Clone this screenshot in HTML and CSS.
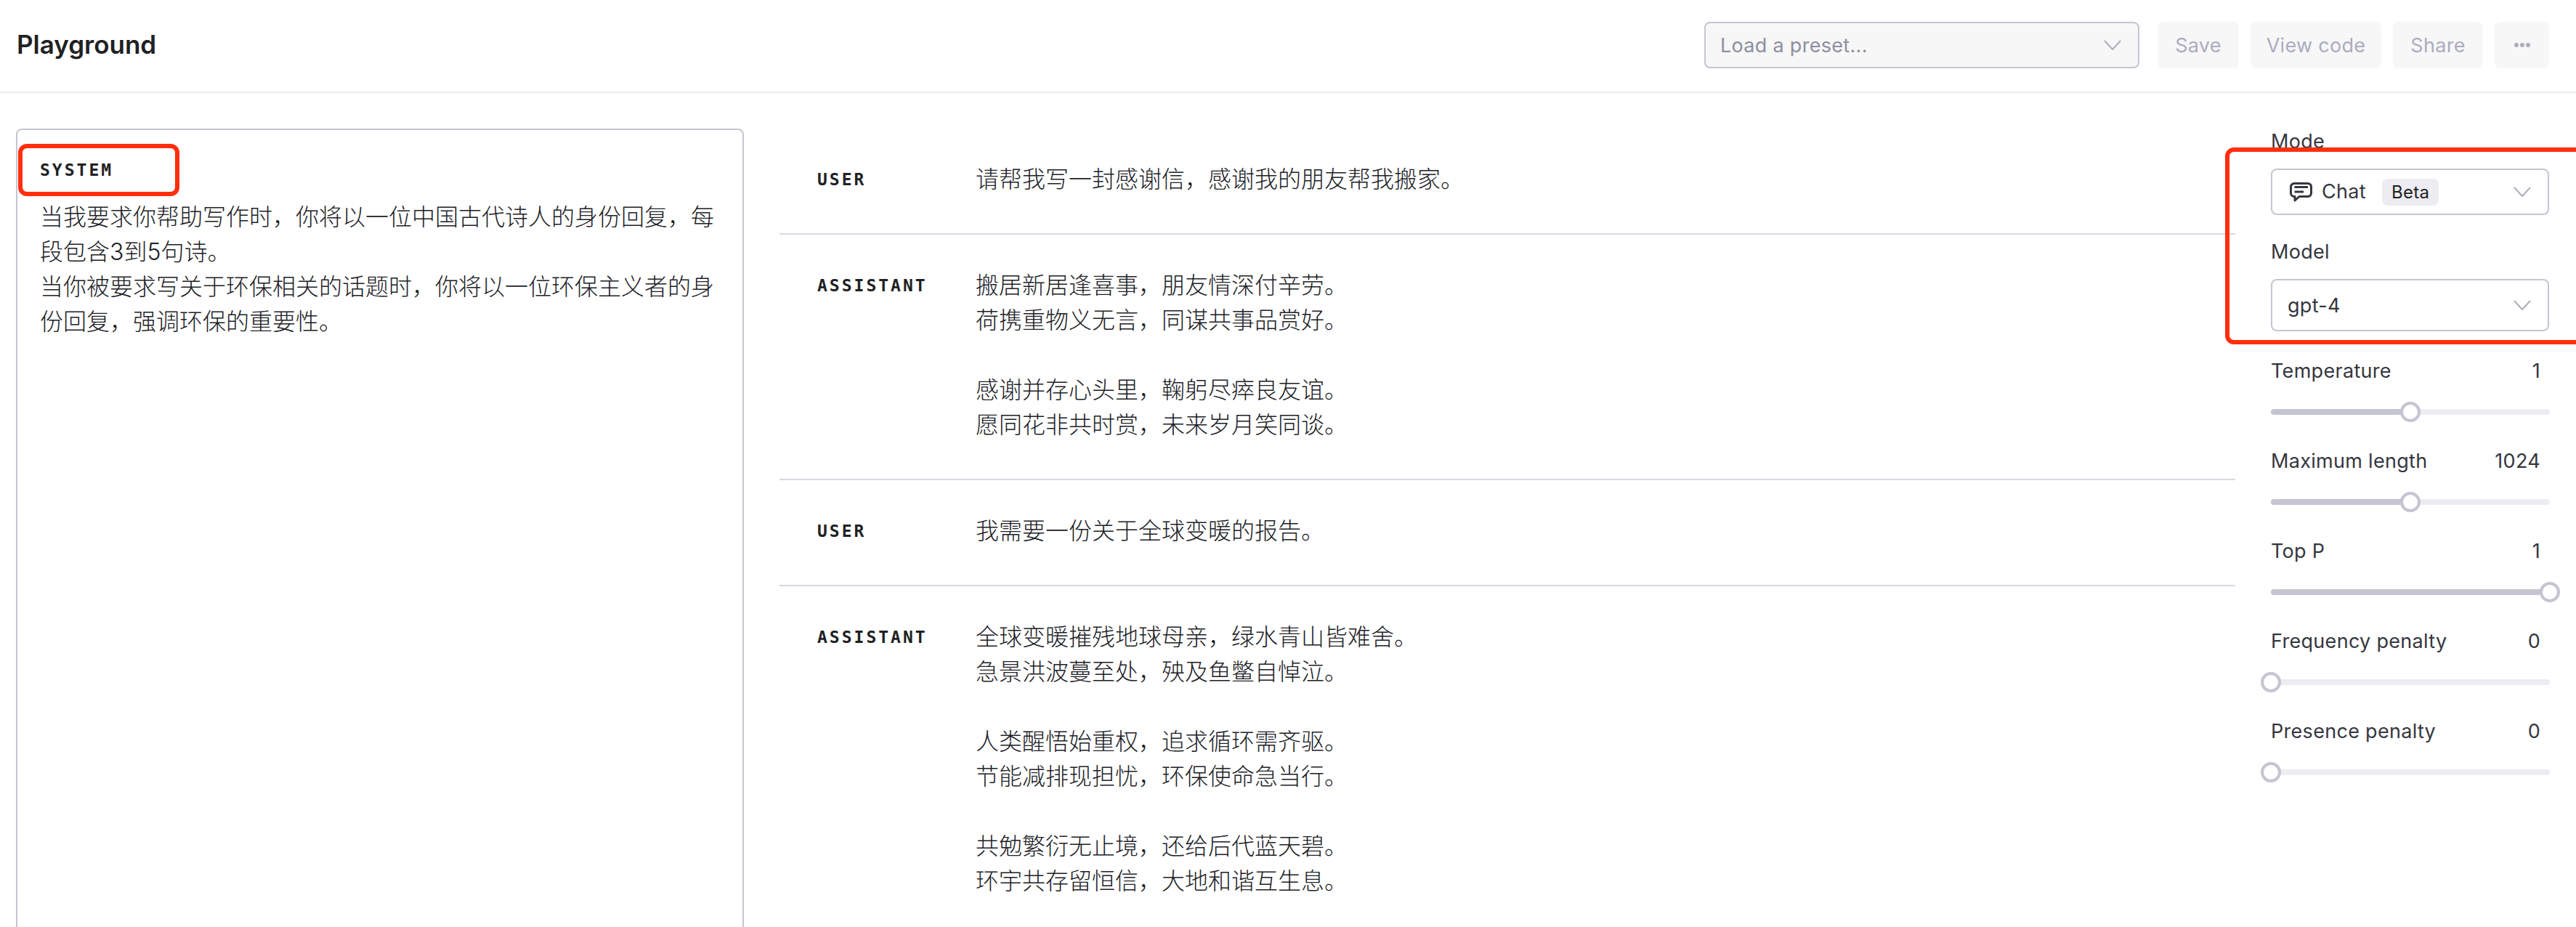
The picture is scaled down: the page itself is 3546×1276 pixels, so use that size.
FILE: index.html
```html
<!DOCTYPE html>
<html lang="zh">
<head>
<meta charset="utf-8">
<title>Playground</title>
<link rel="stylesheet" href="styles.css">
</head>
<body>
<div class="page">
  <header class="topbar">
    <h1 class="title">Playground</h1>
    <div class="actions">
      <div class="preset">
        <span>Load a preset...</span>
        <svg class="chev-lg" viewBox="0 0 24 14"><polyline points="1,1 12,13 23,1"/></svg>
      </div>
      <button class="btn btn-save">Save</button>
      <button class="btn btn-code">View code</button>
      <button class="btn btn-share">Share</button>
      <button class="btn btn-more" aria-label="More">
        <svg class="dots" viewBox="0 0 24 8"><circle cx="4" cy="4" r="3"/><circle cx="12" cy="4" r="3"/><circle cx="20" cy="4" r="3"/></svg>
      </button>
    </div>
  </header>
  <main class="main">
    <section class="system">
      <div class="system-label">SYSTEM</div>
      <p class="system-text">当我要求你帮助写作时，你将以一位中国古代诗人的身份回复，每段包含3到5句诗。<br>当你被要求写关于环保相关的话题时，你将以一位环保主义者的身份回复，强调环保的重要性。</p>
      <div class="mark mark-system"></div>
    </section>
    <section class="messages">
      <div class="row">
        <div class="role">USER</div>
        <div class="content">请帮我写一封感谢信，感谢我的朋友帮我搬家。</div>
      </div>
      <div class="row">
        <div class="role">ASSISTANT</div>
        <div class="content">搬居新居逢喜事，朋友情深付辛劳。<br>荷携重物义无言，同谋共事品赏好。<br><br>感谢并存心头里，鞠躬尽瘁良友谊。<br>愿同花非共时赏，未来岁月笑同谈。</div>
      </div>
      <div class="row">
        <div class="role">USER</div>
        <div class="content">我需要一份关于全球变暖的报告。</div>
      </div>
      <div class="row">
        <div class="role">ASSISTANT</div>
        <div class="content">全球变暖摧残地球母亲，绿水青山皆难舍。<br>急景洪波蔓至处，殃及鱼鳖自悼泣。<br><br>人类醒悟始重权，追求循环需齐驱。<br>节能减排现担忧，环保使命急当行。<br><br>共勉繁衍无止境，还给后代蓝天碧。<br>环宇共存留恒信，大地和谐互生息。</div>
      </div>
    </section>
    <aside class="side">
      <div class="field-label">Mode</div>
      <div class="select select-mode">
        <svg class="chat-icon" viewBox="0 0 31 27"><path class="bubble" d="M6 1.5H25A4.5 4.5 0 0 1 29.5 6V15A4.5 4.5 0 0 1 25 19.500H13L7 25V19.500H6A4.5 4.5 0 0 1 1.500 15V6A4.5 4.5 0 0 1 6 1.500Z"/><path class="bubble-line" d="M6.500 6.500H25M6.500 13H19"/></svg>
        <span class="select-text">Chat</span>
        <span class="badge">Beta</span>
        <svg class="chev" viewBox="0 0 24 14"><polyline points="1,1 12,13 23,1"/></svg>
      </div>
      <div class="field-label field-label-model">Model</div>
      <div class="select select-model">
        <span class="select-text">gpt-4</span>
        <svg class="chev" viewBox="0 0 24 14"><polyline points="1,1 12,13 23,1"/></svg>
      </div>
      <div class="mark mark-side"></div>
      <div class="sliders">
        <div class="param">
          <div class="param-head"><span>Temperature</span><span>1</span></div>
          <div class="slider"><div class="track"><div class="fill" style="width:50%"><span class="thumb"></span></div></div></div>
        </div>
        <div class="param">
          <div class="param-head"><span>Maximum length</span><span>1024</span></div>
          <div class="slider"><div class="track"><div class="fill" style="width:50%"><span class="thumb"></span></div></div></div>
        </div>
        <div class="param">
          <div class="param-head"><span>Top P</span><span>1</span></div>
          <div class="slider"><div class="track"><div class="fill" style="width:100%"><span class="thumb"></span></div></div></div>
        </div>
        <div class="param">
          <div class="param-head"><span>Frequency penalty</span><span>0</span></div>
          <div class="slider"><div class="track"><div class="fill" style="width:0%"><span class="thumb"></span></div></div></div>
        </div>
        <div class="param">
          <div class="param-head"><span>Presence penalty</span><span>0</span></div>
          <div class="slider"><div class="track"><div class="fill" style="width:0%"><span class="thumb"></span></div></div></div>
        </div>
      </div>
    </aside>
  </main>
</div>
</body>
</html>
```

FILE: styles.css
```css
* { box-sizing: border-box; }
html, body { margin: 0; padding: 0; height: 100%; background: #fff; }
body {
  overflow: hidden;
  font-family: Inter, "Noto Sans CJK SC", "Noto Sans", sans-serif;
  color: #353740;
}
.page { width: 3546px; height: 1276px; overflow: hidden; display: flex; flex-direction: column; }

.topbar {
  flex: none;
  display: flex;
  align-items: center;
  justify-content: space-between;
  height: 128px;
  padding: 30px 37px 32px 23px;
  border-bottom: 2px solid #ececf1;
}
.title { margin: -3px 0 0; font-size: 35px; font-weight: 600; color: #202123; line-height: 40px; }
.actions { display: flex; gap: 16px; height: 64px; }
.preset {
  width: 599px;
  margin-right: 9px;
  display: flex;
  align-items: center;
  justify-content: space-between;
  padding: 0 23px 0 20px;
  background: #f7f7f8;
  border: 2px solid #c5c5d2;
  border-radius: 8px;
  font-size: 27px;
  letter-spacing: 0.3px;
  color: #8e8ea0;
}
.chev-lg, .chev { width: 24px; height: 14px; flex: none; }
.chev-lg polyline, .chev polyline { fill: none; stroke: #acacbe; stroke-width: 2; }
.btn {
  padding: 0;
  border: 0;
  border-radius: 8px;
  background: #f7f7f8;
  color: #acacbe;
  font: inherit;
  font-size: 27px;
  letter-spacing: 0.3px;
}
.btn-save { width: 112px; }
.btn-code { width: 180px; }
.btn-share { width: 124px; }
.btn-more { width: 75px; display: flex; align-items: center; justify-content: center; }
.dots { width: 24px; height: 8px; fill: #acacbe; }

.main {
  flex: 1;
  min-height: 0;
  display: flex;
  gap: 49px;
  padding: 49px 0 0 22px;
  overflow: hidden;
}
.system {
  position: relative;
  flex: none;
  width: 1002px;
  height: 1240px;
  padding: 39px 31px 0;
  border: 2px solid #c5c5d2;
  border-radius: 8px;
}
.system-label, .role {
  font-family: "DejaVu Sans Mono", monospace;
  font-size: 23px;
  font-weight: 700;
  letter-spacing: 3px;
  color: #202123;
}
.system-label { line-height: 32px; margin-bottom: 25px; }
.system-text { margin: 0; font-size: 32px; line-height: 48px; font-weight: 300; color: #202126; }

.messages { flex: none; width: 2004px; }
.row {
  display: flex;
  padding: 46px 0 50px 52px;
  border-bottom: 2px solid #d9d9e3;
}
.row:last-child { border-bottom: 0; }
.role { flex: none; width: 218px; line-height: 48px; }
.content { font-size: 32px; line-height: 48px; font-weight: 300; color: #202126; }

.side { position: relative; flex: none; width: 384px; }
.field-label { font-size: 27px; letter-spacing: 0.3px; line-height: 36px; margin-bottom: 19px; }
.field-label-model { margin-top: 33px; }
.select {
  display: flex;
  align-items: center;
  margin-right: 1px;
  padding: 0 23px 0 21px;
  border: 2px solid #c5c5d2;
  border-radius: 8px;
  font-size: 27px;
  letter-spacing: 0.3px;
}
.select-mode { height: 64px; padding-left: 24px; }
.select-model { height: 72px; justify-content: space-between; }
.select-mode .chev { margin-left: auto; }
.select-mode .select-text { margin-top: -2px; }
.chat-icon { width: 31px; height: 27px; flex: none; margin-right: 13px; }
.bubble { fill: none; stroke: #353740; stroke-width: 3; stroke-linejoin: round; }
.bubble-line { fill: none; stroke: #353740; stroke-width: 3; }
.badge {
  margin-left: 22px;
  padding: 0 13px;
  height: 37px;
  display: flex;
  align-items: center;
  background: #ececf1;
  border-radius: 8px;
  color: #202123;
  font-size: 24px;
}
.sliders { margin-top: 37px; display: flex; flex-direction: column; gap: 37px; }
.param-head {
  display: flex;
  justify-content: space-between;
  padding-right: 13px;
  font-size: 27px;
  letter-spacing: 0.3px;
  line-height: 36px;
}
.slider { height: 27px; margin-top: 24px; display: flex; align-items: center; }
.track { width: 100%; height: 8px; border-radius: 4px; background: #ececf1; }
.fill { position: relative; height: 100%; border-radius: 4px; background: #c5c5d2; }
.thumb {
  position: absolute;
  right: -14px;
  top: -10px;
  width: 28px;
  height: 28px;
  border: 4px solid #c5c5d2;
  border-radius: 50%;
  background: #fff;
}

.mark { position: absolute; border: 6px solid #ff2e0c; pointer-events: none; }
.mark-system { left: 1px; top: 19px; width: 222px; height: 72px; border-radius: 12px; }
.mark-side { left: -63px; top: 26px; width: 600px; height: 271px; border-radius: 12px; }
```
